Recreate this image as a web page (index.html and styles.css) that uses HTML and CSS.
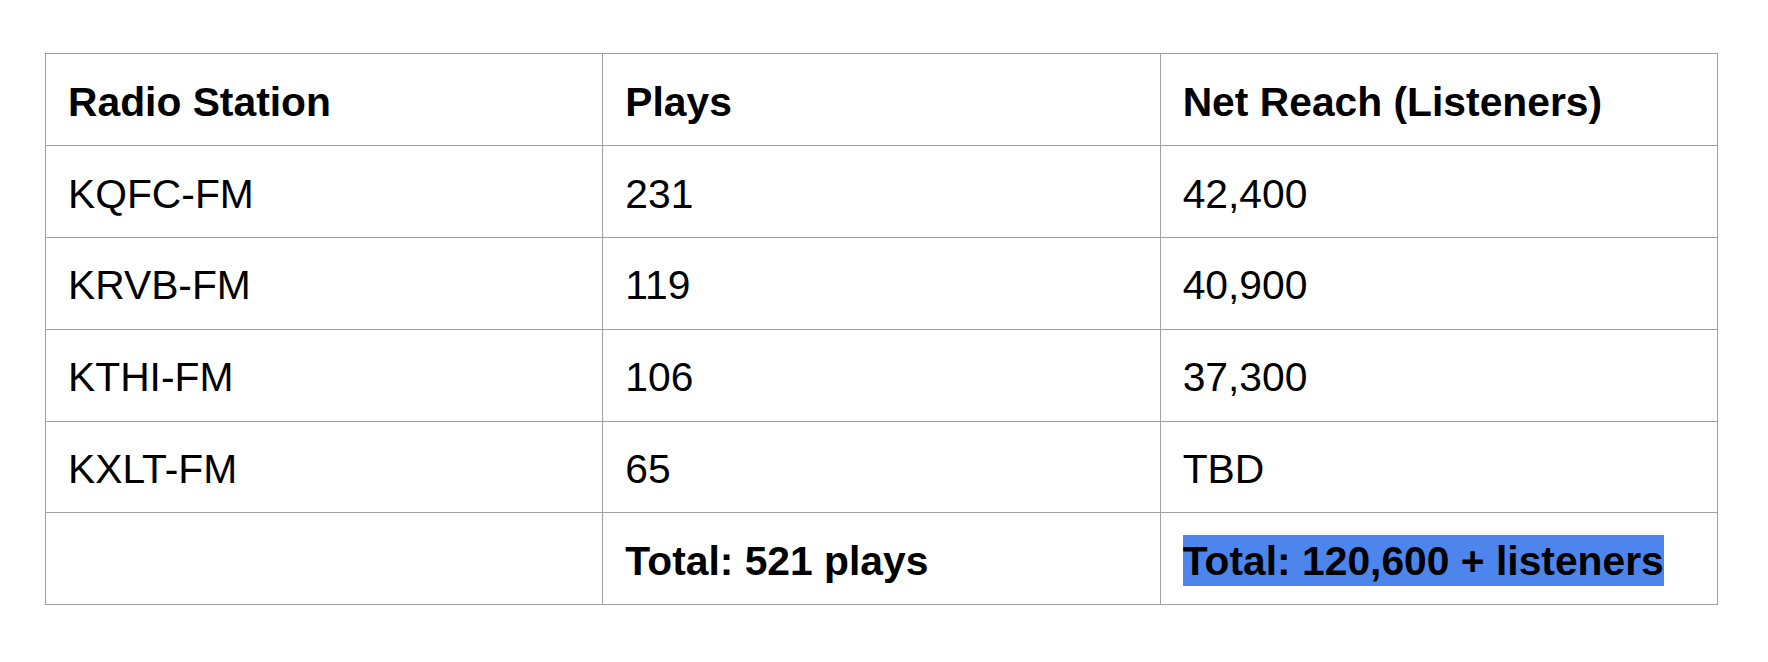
FILE: index.html
```html
<!DOCTYPE html>
<html lang="en">
<head>
  <meta charset="UTF-8">
  <meta name="viewport" content="width=device-width, initial-scale=1.0">
  <title>Radio Station Plays</title>
  <link rel="stylesheet" href="styles.css">
</head>
<body>

  <table class="plays-table">
    <thead>
      <tr>
        <th>Radio Station</th>
        <th>Plays</th>
        <th>Net Reach (Listeners)</th>
      </tr>
    </thead>
    <tbody>
      <tr>
        <td>KQFC-FM</td>
        <td>231</td>
        <td>42,400</td>
      </tr>
      <tr>
        <td>KRVB-FM</td>
        <td>119</td>
        <td>40,900</td>
      </tr>
      <tr>
        <td>KTHI-FM</td>
        <td>106</td>
        <td>37,300</td>
      </tr>
      <tr>
        <td>KXLT-FM</td>
        <td>65</td>
        <td>TBD</td>
      </tr>
      <!-- Totals row -->
      <tr class="total-row">
        <td></td>
        <td>Total: 521 plays</td>
        <td><span class="selected">Total: 120,600 + listeners</span></td>
      </tr>
    </tbody>
  </table>

</body>
</html>
```

FILE: styles.css
```css
body {
  font-family: 'Liberation Sans', Arial, sans-serif;
  background-color: #fff;
  color: #000;
  margin: 0;
  padding: 53px 0 0 45px;
}

.plays-table {
  border-collapse: collapse;
  table-layout: fixed;
  width: 1673px;
  font-size: 40.8px;
}

.plays-table th,
.plays-table td {
  border: 1.5px solid #a0a0a0;
  height: 85.4px;
  padding: 5.5px 22px 0;
  text-align: left;
  vertical-align: middle;
  white-space: nowrap;
}

.plays-table th {
  font-weight: bold;
}

.total-row td {
  font-weight: bold;
}

/* highlighted text, as in a selection */
.selected {
  background-color: #4e85ec;
  padding: 3px 0 2px;
}
```
